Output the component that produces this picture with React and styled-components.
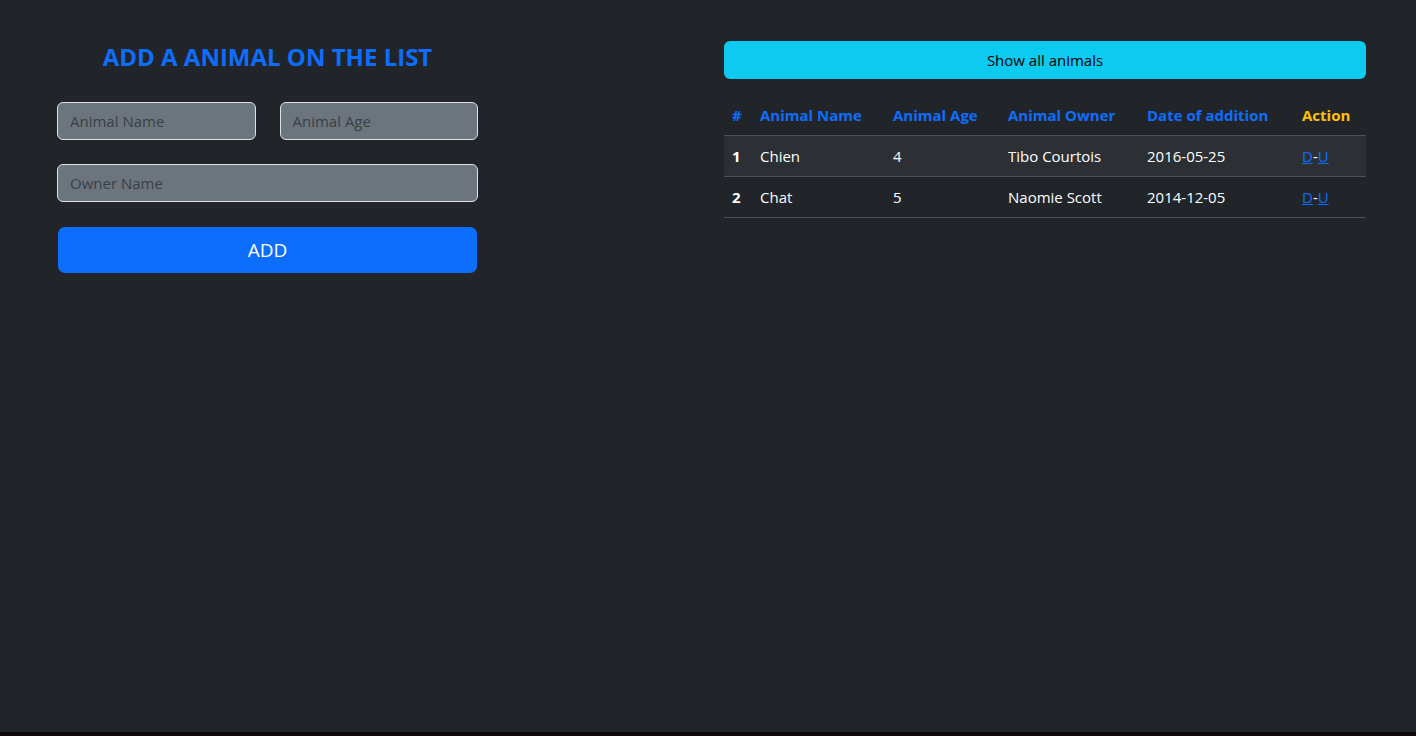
import React from 'react';
import styled, { createGlobalStyle } from 'styled-components';

const GlobalStyle = createGlobalStyle`
    html, body {
        margin: 0;
        padding: 0;
        background: #0c0b09;
    }
    body {
        font-family: "Open Sans", "Noto Sans", sans-serif;
        font-size: 16px;
        color: #dee2e6;
    }
`;

const animals = [
    { id: 1, name: 'Chien', age: 4, owner: 'Tibo Courtois', date: '2016-05-25' },
    { id: 2, name: 'Chat', age: 5, owner: 'Naomie Scott', date: '2014-12-05' },
];

const App = () => {
    return (
        <>
            <GlobalStyle />
            <Page>
                <FormColumn>
                    <Title>ADD A ANIMAL ON THE LIST</Title>
                    <Form onSubmit={(e) => e.preventDefault()}>
                        <InputRow>
                            <Input placeholder="Animal Name" />
                            <Input placeholder="Animal Age" />
                        </InputRow>
                        <Input placeholder="Owner Name" />
                        <AddButton type="submit">ADD</AddButton>
                    </Form>
                </FormColumn>
                <ListColumn>
                    <ShowButton>Show all animals</ShowButton>
                    <Table>
                        <thead>
                            <tr>
                                <Th width="28px">#</Th>
                                <Th width="133px">Animal Name</Th>
                                <Th width="115px">Animal Age</Th>
                                <Th width="139px">Animal Owner</Th>
                                <Th width="155px">Date of addition</Th>
                                <Th color="#ffc107">Action</Th>
                            </tr>
                        </thead>
                        <tbody>
                            {animals.map((a, i) => (
                                <Row key={a.id} $striped={i % 2 === 0}>
                                    <Td $bold>{a.id}</Td>
                                    <Td>{a.name}</Td>
                                    <Td>{a.age}</Td>
                                    <Td>{a.owner}</Td>
                                    <Td>{a.date}</Td>
                                    <Td>
                                        <Link href="#">D</Link>-<Link href="#">U</Link>
                                    </Td>
                                </Row>
                            ))}
                        </tbody>
                    </Table>
                </ListColumn>
            </Page>
        </>
    );
};

const Page = styled.div`
    min-height: 732px;
    box-sizing: border-box;
    background: #212529;
    display: flex;
    justify-content: space-between;
    align-items: flex-start;
    padding: 41px 50px 0 57px;
`;

const FormColumn = styled.div`
    width: 421px;
    display: flex;
    flex-direction: column;
`;

const Title = styled.h3`
    margin: 1px 0 0;
    text-align: center;
    color: #0d6efd;
    font-size: 24px;
    font-weight: 700;
    line-height: 29px;
`;

const Form = styled.form`
    margin-top: 31px;
    display: flex;
    flex-direction: column;
    gap: 24px;
`;

const InputRow = styled.div`
    display: flex;
    gap: 24px;

    & > input {
        flex: 1;
        min-width: 0;
    }
`;

const Input = styled.input`
    height: 38px;
    box-sizing: border-box;
    padding: 6px 12px;
    font-family: inherit;
    font-size: 15px;
    color: #212529;
    background: #6c757d;
    border: 1px solid #dee2e6;
    border-radius: 6px;
    outline: none;

    &::placeholder {
        color: #3a4046;
    }
`;

const AddButton = styled.button`
    margin: 1px 1px 0;
    height: 46px;
    border: none;
    border-radius: 7px;
    background: #0d6efd;
    color: #fff;
    font-family: inherit;
    font-size: 19px;
    cursor: pointer;
`;

const ListColumn = styled.div`
    width: 642px;
    display: flex;
    flex-direction: column;
    gap: 18px;
`;

const ShowButton = styled.button`
    height: 38px;
    border: none;
    border-radius: 6px;
    background: #0dcaf0;
    color: #000;
    font-family: inherit;
    font-size: 15px;
    cursor: pointer;
`;

const Table = styled.table`
    width: 100%;
    border-collapse: collapse;
    font-size: 15px;
`;

const Th = styled.th`
    width: ${props => props.width || 'auto'};
    text-align: left;
    padding: 7px 8px 9px;
    height: 38px;
    box-sizing: border-box;
    color: ${props => props.color || '#0d6efd'};
    font-weight: 700;
    border-bottom: 1px solid #495057;
`;

const Row = styled.tr`
    background: ${props => props.$striped ? '#2c3034' : 'transparent'};
`;

const Td = styled.td`
    padding: 8px;
    height: 41px;
    box-sizing: border-box;
    color: #fff;
    font-weight: ${props => props.$bold ? 700 : 400};
    border-bottom: 1px solid #495057;
`;

const Link = styled.a`
    color: #0d6efd;
    text-decoration: underline;
`;

export default App;
